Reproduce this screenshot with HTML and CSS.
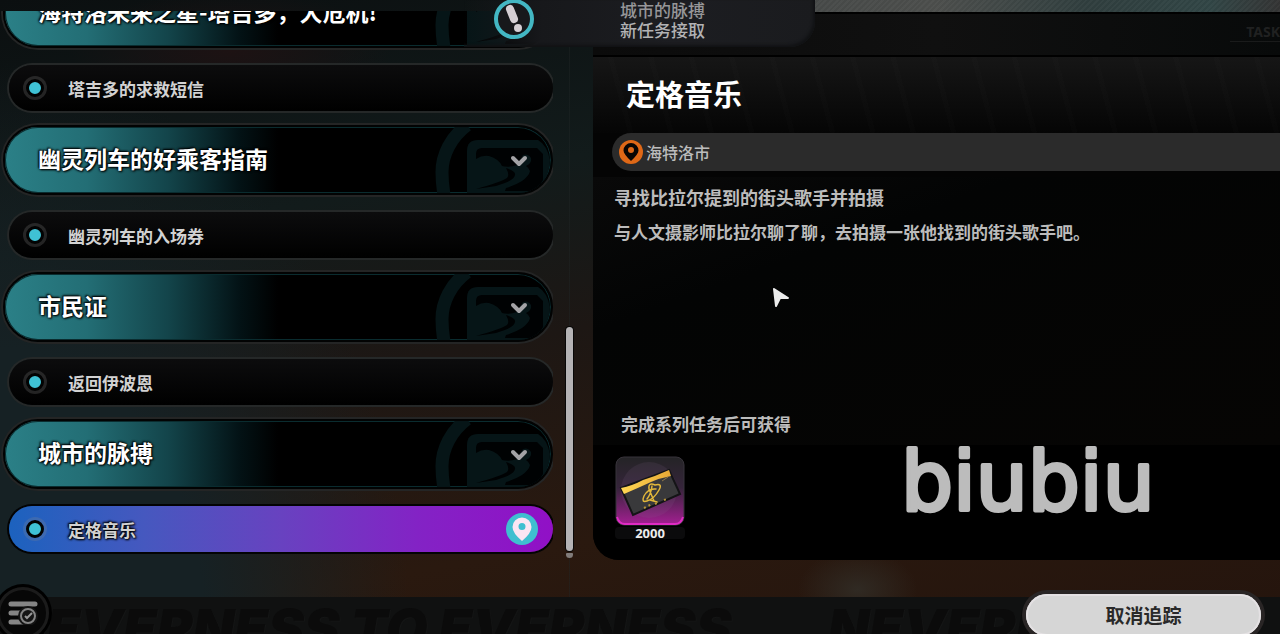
FILE: index.html
```html
<!DOCTYPE html>
<html lang="zh-CN">
<head>
<meta charset="utf-8">
<meta name="viewport" content="width=device-width, initial-scale=1">
<title>城市的脉搏</title>
<link rel="stylesheet" href="styles.css">
</head>
<body>
<svg class="defs" aria-hidden="true">
  <symbol id="emblem" viewBox="0 0 116 66">
    <path d="M32 -2C16 10 7 28 7 45Q7 56 9 68" fill="none" stroke="#061517" stroke-width="13"/>
    <path d="M32 66V24Q32 13 43 13H103Q112 18 115 33Q114 50 104 66Z" fill="#061517"/>
    <path d="M41 32V27Q41 21 47 21H102L108 27V53Q104 61 98 64H70L71 61Q81 58 87 54Q94 49 95 44Q94 41 91 39Q97 36 96 31Q93 26 88 28L82 38Q74 41 67 39Q64 32 54 29Q47 28 41 32Z" fill="#000203"/>
    <path d="M71 41Q81 44 80 48Q79 54 61 59L41 62Q66 55 72 51Q75 48 71 41Z" fill="#000203"/>
    <path d="M78 31L84 37L90 31" fill="none" stroke="#a3a3a6" stroke-width="4" stroke-linecap="round" stroke-linejoin="round"/>
  </symbol>
</svg>

<main class="screen">
  <nav class="quests" aria-label="任务列表">
    <div class="quest-list">
      <button class="series" type="button"><span>海特洛未来之星-塔吉多，大危机!</span><svg><use href="#emblem"/></svg></button>
      <button class="task" type="button"><i class="dot"></i><span>塔吉多的求救短信</span></button>
      <button class="series" type="button"><span>幽灵列车的好乘客指南</span><svg><use href="#emblem"/></svg></button>
      <button class="task" type="button"><i class="dot"></i><span>幽灵列车的入场券</span></button>
      <button class="series" type="button"><span>市民证</span><svg><use href="#emblem"/></svg></button>
      <button class="task" type="button"><i class="dot"></i><span>返回伊波恩</span></button>
      <button class="series" type="button"><span>城市的脉搏</span><svg><use href="#emblem"/></svg></button>
      <button class="task selected" type="button" aria-current="true"><i class="dot"></i><span>定格音乐</span>
        <svg class="track" viewBox="0 0 32 32"><circle cx="16" cy="16" r="16" fill="#3fbfd0"/><path fill-rule="evenodd" d="M16 4.500A9.500 9.500 0 0 0 6.500 14Q6.500 20 16 28Q25.500 20 25.500 14A9.500 9.500 0 0 0 16 4.500ZM16 10A3.500 3.500 0 1 1 16 17A3.500 3.500 0 1 1 16 10Z" fill="#fbe6f3"/></svg>
      </button>
    </div>
    <div class="scrollbar"><div class="thumb"></div><div class="thumb-end"></div></div>
  </nav>

  <section class="detail">
    <div class="strip"></div>
    <header class="bar"><span>TASK</span></header>
    <article class="panel">
      <div class="heading"><h1>定格音乐</h1></div>
      <div class="place">
        <svg viewBox="0 0 24 24"><circle cx="12" cy="12" r="12" fill="#df6817"/><path fill-rule="evenodd" d="M12 3A7.500 7.500 0 0 0 4.500 10.500Q4.500 14 12 21Q19.500 14 19.500 10.500A7.500 7.500 0 0 0 12 3ZM12 7A3 3 0 1 1 12 13A3 3 0 1 1 12 7Z" fill="#090604"/></svg>
        <span>海特洛市</span>
      </div>
      <div class="story">
        <h2>寻找比拉尔提到的街头歌手并拍摄</h2>
        <p>与人文摄影师比拉尔聊了聊，去拍摄一张他找到的街头歌手吧。</p>
        <p class="reward-title">完成系列任务后可获得</p>
      </div>
      <div class="rewards">
        <figure class="reward">
          <svg viewBox="0 0 70 70">
            <defs>
              <linearGradient id="slot" x2="0" y2="1"><stop offset="0" stop-color="#242426"/><stop offset=".45" stop-color="#35243a"/><stop offset="1" stop-color="#a51f93"/></linearGradient>
              <linearGradient id="gold" x2="1" y2="0"><stop offset="0" stop-color="#ffd653"/><stop offset="1" stop-color="#e7a936"/></linearGradient>
            </defs>
            <rect x="1" y="1" width="68" height="68" rx="8" fill="url(#slot)" stroke="#37333a"/>
            <circle cx="34" cy="34" r="28" fill="#8a6a91" opacity=".13"/>
            <path d="M2 61Q4 68 10 68H60Q66 68 68 61" fill="none" stroke="#e02bc4" stroke-width="2"/>
            <path d="M6 32L54 14L65 38L18 59Z" fill="#39393b" stroke="#141416" stroke-width="2"/>
            <path d="M6 32Q17 30 28 24Q41 20 54 14L56 20Q45 22 36 26Q23 32 9 38Z" fill="url(#gold)"/>
            <path d="M40 29Q33 26 34 33L39 45M40 29Q48 27 44 34Q39 43 32 45Q26 47 29 40Q33 32 41 33M32 43Q36 38 37 30M35 44L42 46" fill="none" stroke="#e3b83b" stroke-width="1.500" stroke-linecap="round"/>
            <path d="M29 52L37 48M40 48L44 46M49 44L52 43" stroke="#b89437" stroke-width="2" stroke-dasharray="2 3"/>
            <path d="M47 25L53 21" stroke="#8d774a"/>
          </svg>
          <figcaption>2000</figcaption>
        </figure>
      </div>
    </article>
  </section>
</main>

<footer class="footer">
  <div class="motto" aria-hidden="true"><span>NEVERNESS TO EVERNESS</span><span>NEVERNESS</span></div>
  <button class="log" type="button" aria-label="任务记录">
    <svg viewBox="0 0 30 24"><path d="M3 3H27M3 12H14M3 21H16" stroke="#858585" stroke-width="5" stroke-linecap="round"/><circle cx="20" cy="15" r="10" fill="#141414"/><circle cx="20" cy="15" r="7" fill="#151515" stroke="#858585" stroke-width="2"/><path d="M17 15L19 17L24 12" fill="none" stroke="#979797" stroke-width="2"/></svg>
  </button>
  <button class="cancel" type="button">取消追踪</button>
</footer>

<aside class="toast" role="status">
  <svg viewBox="0 0 40 40"><circle cx="20" cy="19" r="18" fill="#17181b" stroke="#43b7c3" stroke-width="4"/><path d="M16 9L20 19" stroke="#d5cfd4" stroke-width="8" stroke-linecap="round"/><circle cx="24" cy="28" r="4" fill="#d5cfd4"/></svg>
  <div><p>城市的脉搏</p><p>新任务接取</p></div>
</aside>

<svg class="wordmark" viewBox="0 0 264 84" role="img" aria-label="biubiu"><text x="1" y="71">biubiu</text></svg>
<svg class="cursor" viewBox="0 0 20 24" aria-hidden="true"><path d="M3 3L17 12L9 12L5 20Z" fill="#ececec" stroke="#ececec" stroke-width="2" stroke-linejoin="round"/></svg>
</body>
</html>
```
FILE: styles.css
```css
* { box-sizing: border-box; }

body {
  margin: 0;
  height: 100vh;
  overflow: hidden;
  position: relative;
  display: flex;
  flex-direction: column;
  color: #bcbcbc;
  font-family: "Noto Sans CJK SC", sans-serif;
  background:
    radial-gradient(ellipse 60px 40px at 67% 93%, #302a23, transparent),
    radial-gradient(ellipse 160px 60px at 18% 8%, #1d1213, transparent),
    radial-gradient(ellipse 32% 90% at 0 100%, #162124 50%, transparent),
    linear-gradient(170deg, #0b0f10 0, #121b1b 30%, #1d1714 50%, #2a190f 75%, #24140d 100%);
}

h1, h2, p, figure { margin: 0; }
button { font: inherit; border: 0; padding: 0; text-align: left; cursor: pointer; }
svg { flex: none; }
.defs { position: absolute; width: 0; height: 0; }

.screen {
  flex: 1;
  min-height: 0;
  display: grid;
  grid-template-columns: 593fr 687fr;
  grid-template-rows: minmax(0, 1fr);
}

/* Quest list */
.quests {
  min-height: 0;
  display: flex;
  gap: 13px;
  padding: 11px 20px 0 0;
}
.quest-list {
  flex: 1;
  min-width: 0;
  overflow: hidden;
  display: flex;
  flex-direction: column;
  justify-content: flex-end;
  padding: 0 0 45px 3px;
}
.series {
  flex: none;
  display: flex;
  align-items: center;
  justify-content: space-between;
  height: 70px;
  margin-bottom: 17px;
  padding-left: 33px;
  overflow: hidden;
  border: 2px solid #020303;
  border-radius: 35px;
  background: linear-gradient(90deg, #2b8087, #236e75 15%, #13444a 30%, #031215 43%, #000 50%);
  box-shadow: 0 0 0 2px #242525, inset 0 0 0 1px #0a2c2f;
  color: #fff;
  font-size: 23px;
  font-weight: 700;
  text-shadow: 0 0 3px #000, 1px 1px 2px #000, -1px -1px 2px #000;
}
.series span { padding-bottom: 4px; }
.series svg { width: 116px; height: 66px; }
.task {
  flex: none;
  display: flex;
  align-items: center;
  gap: 24px;
  height: 46px;
  margin: 0 0 14px 6px;
  padding-left: 17px;
  border-radius: 23px;
  background: linear-gradient(#0c0c0d, #000);
  box-shadow: 0 0 0 2px #252828;
  color: #d2d2d2;
  font-size: 17px;
  font-weight: 700;
}
.dot {
  width: 18px;
  height: 18px;
  border: 3px solid #020303;
  border-radius: 50%;
  background: #3fc2d5;
  box-shadow: 0 0 0 3px #8888883d;
}
.selected {
  margin-bottom: 0;
  padding-right: 15px;
  background: linear-gradient(90deg, #1c62be, #4658bf 25%, #6842c0 50%, #8323c5 75%, #9110c6);
  box-shadow: 0 0 0 2px #030304;
  text-shadow: 0 0 3px #000, 1px 1px 2px #000, -1px -1px 2px #000;
}
.track { width: 32px; height: 32px; margin-left: auto; }
.scrollbar {
  flex: none;
  width: 7px;
  display: flex;
  flex-direction: column;
  justify-content: flex-end;
  gap: 2px;
  padding-bottom: 39px;
  background: linear-gradient(90deg, transparent 40%, #20262666 40% 60%, transparent 60%);
}
.thumb { height: 41%; border-radius: 4px; background: #b5b3b5; box-shadow: 0 0 0 1px #080808; }
.thumb-end { height: 5px; border-radius: 1px 1px 4px 4px; background: #817c7a; }

/* Task detail */
.detail {
  min-width: 0;
  display: flex;
  flex-direction: column;
  padding-bottom: 37px;
}
.strip {
  height: 12px;
  background:
    repeating-linear-gradient(135deg, #ffffff08 0 2px, transparent 2px 4px),
    linear-gradient(90deg, #3c4040, #4b4d4b 50%, #2f3d3d 72%, #304444 90%, #333);
}
.bar {
  height: 45px;
  display: flex;
  align-items: center;
  justify-content: flex-end;
  overflow: hidden;
  border: solid #000;
  border-width: 2px 0;
  background: linear-gradient(90deg, #0b0b0b, #101010 50%, #080a0a);
  color: #202121;
  font: 700 14px "Noto Sans", sans-serif;
}
.bar span { margin: -6px 0 0; border-bottom: 1px solid #1a1b1b; padding-left: 16px; }
.panel {
  flex: 1;
  display: flex;
  flex-direction: column;
  overflow: hidden;
  border-bottom-left-radius: 26px;
  background: #040404;
}
.heading {
  height: 76px;
  display: flex;
  align-items: center;
  padding: 0 0 5px 33px;
  background:
    repeating-linear-gradient(75deg, transparent 0 34px, #ffffff02 34px 39px),
    linear-gradient(#161616, #050505);
}
h1 { color: #fff; font-size: 29px; line-height: 40px; font-weight: 700; }
.place {
  height: 38px;
  margin-left: 19px;
  display: flex;
  align-items: center;
  gap: 3px;
  padding-left: 7px;
  border-radius: 19px 0 0 19px;
  background: #2b2b2b;
  font-size: 16px;
  font-weight: 500;
}
.place svg { width: 24px; height: 24px; }
.story {
  flex: 1;
  display: flex;
  flex-direction: column;
  margin-top: 6px;
  padding: 7px 21px 8px;
  font-size: 17px;
  line-height: 26px;
  font-weight: 700;
  background: linear-gradient(160deg, #090909, #030404 30%, #060504);
}
h2 { margin-bottom: 9px; font-size: 18px; line-height: 26px; font-weight: 700; }
.reward-title { margin: auto 0 0 7px; }
.rewards { height: 115px; padding: 11px 22px; background: #000; }
.reward { width: 70px; }
.reward svg { display: block; width: 70px; height: 70px; }
figcaption {
  margin-top: 1px;
  border-radius: 4px;
  background: #0b0b0c;
  color: #ededed;
  font: 700 13px/12px "Noto Sans", sans-serif;
  text-align: center;
}

/* Footer */
.footer {
  flex: none;
  position: relative;
  height: 37px;
  display: flex;
  align-items: flex-start;
  justify-content: space-between;
  background: #101111;
}
.motto {
  position: absolute;
  inset: 0;
  overflow: hidden;
  display: flex;
  gap: 96px;
  padding: 4px 0 0 5px;
  white-space: nowrap;
  color: #0b0b0b;
  font: italic 900 54px/56px Inter, sans-serif;
  text-shadow: 1px 1px 0 #141515;
}
.log {
  position: relative;
  width: 52px;
  height: 52px;
  margin: -10px 0 0 -3px;
  display: grid;
  place-items: center;
  border: 3px solid #1b1b1b;
  border-radius: 50%;
  background: #070707;
  box-shadow: 0 0 0 3px #000;
}
.log svg { width: 30px; height: 24px; }
.cancel {
  position: relative;
  width: 235px;
  height: 42px;
  margin: -3px 19px 0 0;
  padding-bottom: 2px;
  border-radius: 21px;
  background: #d6d6d6;
  box-shadow: 0 0 0 4px #292525, inset 0 0 0 2px #e4e1e3;
  color: #292929;
  font-size: 19px;
  font-weight: 700;
  text-align: center;
}

/* Overlays */
.toast {
  position: absolute;
  top: 0;
  left: 464px;
  width: 351px;
  height: 47px;
  display: flex;
  gap: 86px;
  padding-left: 30px;
  border-radius: 0 0 25px 0;
  background: linear-gradient(90deg, transparent, #17181b 22%, #1c1d21 60%, #1a1b1e);
  box-shadow: inset -2px -2px 3px #111214;
  color: #969698;
  font-size: 17px;
  line-height: 20px;
  font-weight: 500;
}
.toast svg { width: 40px; height: 40px; }
.toast p + p { color: #b2b2b4; }
.wordmark { position: absolute; left: 900px; top: 439px; width: 264px; height: 84px; }
.wordmark text {
  font: 400 82px "DejaVu Sans", sans-serif;
  fill: #bcbcbc;
  stroke: #bcbcbc;
  stroke-width: 4px;
  stroke-linejoin: round;
}
.cursor { position: absolute; left: 771px; top: 286px; width: 20px; height: 24px; }
```
